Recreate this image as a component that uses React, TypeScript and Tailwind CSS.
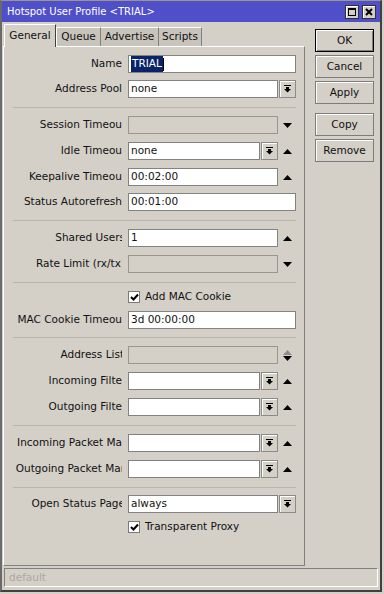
import React from "react";

function DropIcon() {
  return (
    <svg width="7" height="8" viewBox="0 0 7 8">
      <rect x="0" y="0" width="7" height="1" fill="#000" />
      <rect x="2" y="2" width="3" height="2" fill="#000" />
      <polygon points="0,4 7,4 3.5,7.5" fill="#000" />
    </svg>
  );
}

function Tri({ up, grey }: { up?: boolean; grey?: boolean }) {
  return (
    <svg width="9" height="5" viewBox="0 0 9 5">
      <polygon points={up ? "0,5 9,5 4.5,0" : "0,0 9,0 4.5,5"} fill={grey ? "#8c8c8c" : "#000"} />
    </svg>
  );
}

function DropButton() {
  return (
    <div className="w-[17px] h-[18px] shrink-0 flex items-center justify-center border border-[#8a8a8a] bg-[#d4d0c8] shadow-[inset_1px_1px_0_#ffffff]">
      <DropIcon />
    </div>
  );
}

function Box({ value, disabled, width }: { value?: React.ReactNode; disabled?: boolean; width: string }) {
  return (
    <div
      className={`h-[18px] shrink-0 flex items-center pl-[2px] overflow-hidden whitespace-nowrap border ${
        disabled ? "bg-[#d4d0c8] border-[#9a968e]" : "bg-white border-[#828282]"
      } ${width}`}
    >
      {value}
    </div>
  );
}

type Kind = "text" | "drop" | "up" | "down" | "dropup" | "updown";

function Field({ kind, value, disabled }: { kind: Kind; value?: React.ReactNode; disabled?: boolean }) {
  if (kind === "text") return <Box value={value} disabled={disabled} width="w-[168px]" />;
  if (kind === "drop")
    return (
      <div className="flex gap-px">
        <Box value={value} width="w-[150px]" />
        <DropButton />
      </div>
    );
  if (kind === "dropup")
    return (
      <div className="flex items-center">
        <div className="flex gap-px">
          <Box value={value} width="w-[132px]" />
          <DropButton />
        </div>
        <div className="w-[18px] flex justify-center">
          <Tri up />
        </div>
      </div>
    );
  return (
    <div className="flex items-center">
      <Box value={value} disabled={disabled} width="w-[150px]" />
      <div className="w-[18px] flex flex-col items-center gap-px">
        {kind === "up" && <Tri up />}
        {kind === "down" && <Tri />}
        {kind === "updown" && (
          <>
            <Tri up grey />
            <Tri />
          </>
        )}
      </div>
    </div>
  );
}

function Row({ label, cut, className, children }: { label: string; cut?: string; className?: string; children: React.ReactNode }) {
  return (
    <div className={`flex items-center h-[18px] ${className ?? ""}`}>
      <div className="w-[118px] shrink-0 flex justify-end overflow-hidden whitespace-nowrap">
        <span className={cut ?? ""}>{label}</span>
      </div>
      <div className="ml-[6px]">{children}</div>
    </div>
  );
}

function Check({ label, className }: { label: string; className?: string }) {
  return (
    <div className={`flex items-center h-[14px] pl-[124px] ${className ?? ""}`}>
      <div className="w-[12px] h-[12px] bg-white border border-[#7a7a7a] flex items-center justify-center">
        <svg width="9" height="8" viewBox="0 0 9 8">
          <polyline points="1,4 3.5,6.5 8,1.5" fill="none" stroke="#000" strokeWidth="2" />
        </svg>
      </div>
      <span className="ml-[5px]">{label}</span>
    </div>
  );
}

function Sep({ className }: { className?: string }) {
  return <div className={`ml-[9px] w-[283px] h-px bg-[#bab6ae] ${className ?? ""}`} />;
}

function SideButton({ label, main, className }: { label: string; main?: boolean; className?: string }) {
  return (
    <div
      className={`w-[59px] h-[23px] flex items-center justify-center bg-[#d4d0c8] border ${
        main ? "border-black shadow-[inset_1px_1px_0_#ffffff,inset_-1px_-1px_0_#808080]" : "border-[#7c7c7c] shadow-[inset_1px_1px_0_#ffffff]"
      } ${className ?? ""}`}
    >
      {label}
    </div>
  );
}

export default function App() {
  return (
    <div className="w-[384px] h-[594px] bg-[#d4d0c8] overflow-hidden font-['DejaVu_Sans',sans-serif] text-[10.5px] text-[#111]">
      <div className="w-[382px] h-[592px] flex flex-col border-t border-l-2 border-r-2 border-b-2 border-t-[#9a968e] border-l-[#6a6a6a] border-r-[#404040] border-b-[#404040]">
        {/* title bar */}
        <div className="h-[21px] shrink-0 bg-[#4f4fc9] flex items-center pl-[5px] pr-[4px]">
          <span className="text-white text-[10px]">Hotspot User Profile &lt;TRIAL&gt;</span>
          <div className="ml-auto flex gap-[3px]">
            <div className="w-[14px] h-[14px] bg-[#d4d0c8] border border-[#303030] shadow-[inset_1px_1px_0_#ffffff] flex items-center justify-center">
              <svg width="8" height="8" viewBox="0 0 8 8">
                <rect x="0.5" y="0.5" width="7" height="7" fill="none" stroke="#000" />
                <rect x="0" y="0" width="8" height="2" fill="#000" />
              </svg>
            </div>
            <div className="w-[14px] h-[14px] bg-[#d4d0c8] border border-[#303030] shadow-[inset_1px_1px_0_#ffffff] flex items-center justify-center">
              <svg width="8" height="8" viewBox="0 0 8 8">
                <path d="M1 1 L7 7 M7 1 L1 7" stroke="#000" strokeWidth="2" />
              </svg>
            </div>
          </div>
        </div>

        {/* body */}
        <div className="h-[544px] shrink-0 pt-[2px] flex">
          <div className="ml-px w-[302px] flex flex-col">
            {/* tabs */}
            <div className="h-[22px] flex items-end pl-px">
              <div className="relative z-10 w-[52px] h-[23px] -mb-px bg-[#d4d0c8] border-t border-l border-r border-t-white border-l-white border-r-[#404040] flex items-center justify-center">
                General
              </div>
              <div className="w-[45px] h-[19px] bg-[#c8c4bc] border-t border-l border-r border-t-white border-l-white border-r-[#808080] flex items-center justify-center">
                Queue
              </div>
              <div className="w-[58px] h-[19px] bg-[#c8c4bc] border-t border-r border-t-white border-r-[#808080] flex items-center justify-center">
                Advertise
              </div>
              <div className="w-[43px] h-[19px] bg-[#c8c4bc] border-t border-r border-t-white border-r-[#808080] flex items-center justify-center">
                Scripts
              </div>
            </div>

            {/* panel */}
            <div className="h-[520px] border border-t-white border-l-white border-r-[#808080] border-b-[#808080] flex flex-col pt-[8px]">
              <Row label="Name">
                <Box
                  width="w-[168px]"
                  value={
                    <span className="flex items-center">
                      <span className="bg-[#0a246a] text-white px-px">TRIAL</span>
                      <span className="w-px h-[13px] bg-black" />
                    </span>
                  }
                />
              </Row>
              <Row label="Address Pool" className="mt-[7px]">
                <Field kind="drop" value="none" />
              </Row>
              <Sep className="mt-[9px]" />
              <Row label="Session Timeou" className="mt-[8px]">
                <Field kind="down" disabled />
              </Row>
              <Row label="Idle Timeou" className="mt-[8px]">
                <Field kind="dropup" value="none" />
              </Row>
              <Row label="Keepalive Timeout" cut="mr-[-4px]" className="mt-[8px]">
                <Field kind="up" value="00:02:00" />
              </Row>
              <Row label="Status Autorefresh" className="mt-[7px]">
                <Field kind="text" value="00:01:00" />
              </Row>
              <Sep className="mt-[9px]" />
              <Row label="Shared Users" cut="mr-[-3px]" className="mt-[8px]">
                <Field kind="up" value="1" />
              </Row>
              <Row label="Rate Limit (rx/tx)" cut="mr-[-3px]" className="mt-[8px]">
                <Field kind="down" disabled />
              </Row>
              <Sep className="mt-[9px]" />
              <Check label="Add MAC Cookie" className="mt-[7px]" />
              <Row label="MAC Cookie Timeou" className="mt-[7px]">
                <Field kind="text" value="3d 00:00:00" />
              </Row>
              <Sep className="mt-[8px]" />
              <Row label="Address List" cut="mr-[-2px]" className="mt-[8px]">
                <Field kind="updown" disabled />
              </Row>
              <Row label="Incoming Filte" className="mt-[8px]">
                <Field kind="dropup" />
              </Row>
              <Row label="Outgoing Filte" className="mt-[8px]">
                <Field kind="dropup" />
              </Row>
              <Sep className="mt-[9px]" />
              <Row label="Incoming Packet Ma" className="mt-[8px]">
                <Field kind="dropup" />
              </Row>
              <Row label="Outgoing Packet Mar" cut="mr-[-3px]" className="mt-[8px]">
                <Field kind="dropup" />
              </Row>
              <Sep className="mt-[9px]" />
              <Row label="Open Status Page" cut="mr-[-3px]" className="mt-[7px]">
                <Field kind="drop" value="always" />
              </Row>
              <Check label="Transparent Proxy" className="mt-[7px]" />
            </div>
          </div>

          {/* side buttons */}
          <div className="ml-[10px] mt-[5px] flex flex-col">
            <SideButton label="OK" main />
            <SideButton label="Cancel" className="mt-[3px]" />
            <SideButton label="Apply" className="mt-[3px]" />
            <SideButton label="Copy" className="mt-[9px]" />
            <SideButton label="Remove" className="mt-[3px]" />
          </div>
        </div>

        {/* status bar */}
        <div className="mt-[2px] ml-[2px] w-[374px] h-[19px] shrink-0 border border-t-[#808080] border-l-[#808080] border-r-white border-b-white flex items-center pl-[4px] text-[#aca89f]">
          default
        </div>
      </div>
    </div>
  );
}
